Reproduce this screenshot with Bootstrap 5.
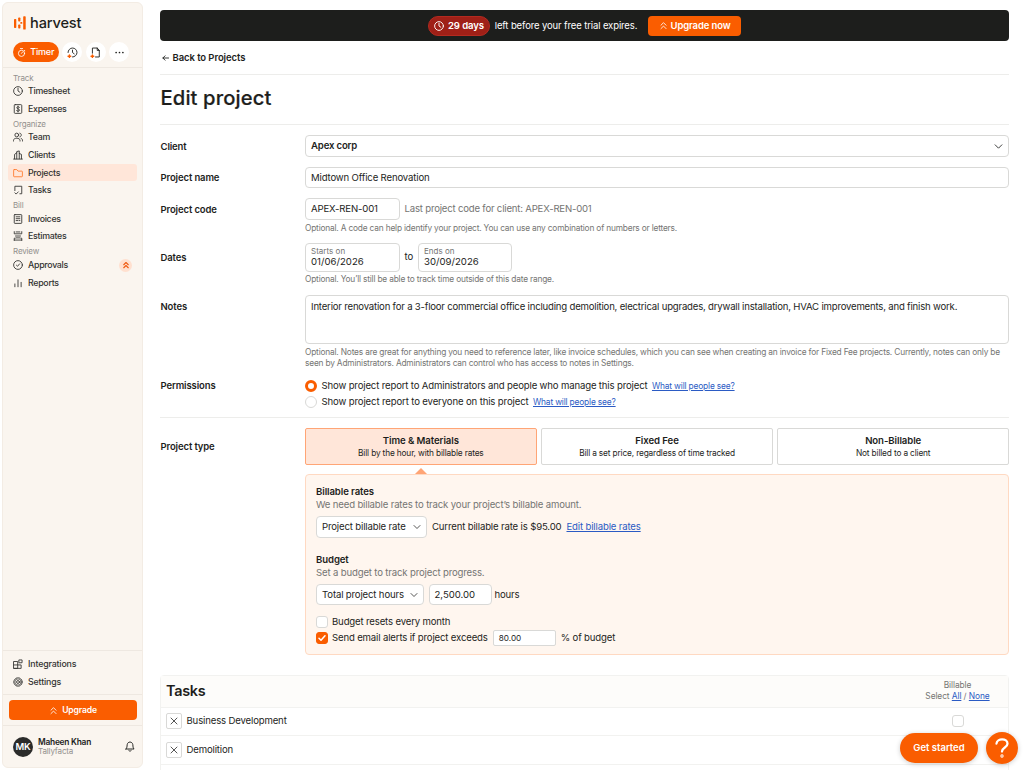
<!DOCTYPE html>
<html lang="en">
<head>
<meta charset="utf-8">
<meta name="viewport" content="width=device-width, initial-scale=1">
<title>Edit project – Harvest</title>
<link href="https://cdn.jsdelivr.net/npm/bootstrap@5.3.0/dist/css/bootstrap.min.css" rel="stylesheet">
<script src="https://cdn.jsdelivr.net/npm/bootstrap@5.3.0/dist/js/bootstrap.bundle.min.js" defer></script>
<style>
:root{--orange:#fa5d00;--ink:#1d1e1c;--line:#ededeb;--field:#d9d9d7;--grey:#757573;--warm:#eee8e1}
html,body{height:770px;overflow:hidden}
body{font-family:Inter,"Liberation Sans",sans-serif;font-size:9.6px;line-height:14px;color:var(--ink);background:#fff;letter-spacing:-.16px}
svg{display:block;flex:none;fill:none;stroke:currentColor;stroke-width:1.5;stroke-linecap:round;stroke-linejoin:round}
a{color:#2b5bc4}
.side{width:141px;height:766px;margin:2px 17px 0 2px;background:#faf5ef;border:1px solid #f3ece4;border-radius:6px}
.brand-row{height:65px;border-bottom:1px solid var(--warm);padding:12px 10px 0}
.brand-name{font-size:14.6px;font-weight:500;line-height:16px;letter-spacing:-.15px;margin-left:4px}
.quick{margin-top:11px;gap:3.6px}
.pill{height:20px;border-radius:10px}
.pill-main{width:45.5px;background:var(--orange);color:#fff;font-weight:500;font-size:9px;letter-spacing:-.15px}
.pill-dot{width:20px;background:#fff}
.pill-dot svg{stroke-width:1.3}
.side-head{height:11px;line-height:12px;padding-left:10px;font-size:8px;color:#92908d;letter-spacing:-.15px}
.side-item{height:17.6px;margin:0 5px;padding:0 5px;border-radius:3px;font-size:8.8px;color:#333331;letter-spacing:-.27px;font-weight:500}
.side-item svg{width:10px;height:10px;margin-right:5px;stroke-width:1.4}
.side-item.current{background:#ffe6d9}
.side-item.current svg{color:#ff7a2e}
.bump{width:13px;height:13px;border-radius:50%;background:#ffe0cf;color:#f05a10}
.side-item .bump svg{width:8px;height:8px;margin:0;stroke-width:2.2}
.side-tools{height:44px;border-top:1px solid var(--warm);padding-top:4.5px}
.side-tools .side-item{letter-spacing:-.15px}
.side-up{height:32px;border-top:1px solid var(--warm);border-bottom:1px solid var(--warm);padding:5px 5px 0 6px}
.upgrade-btn{height:20px;border-radius:4px;background:var(--orange);color:#fff;font-weight:600;font-size:8.6px}
.side-user{height:41px;padding:0 7px 0 10px}
.avatar{width:20px;height:20px;border-radius:50%;background:#2b2b2a;color:#fff;font-size:9.5px;font-weight:600}
.user-name{font-size:8.4px;line-height:9px;font-weight:600;letter-spacing:-.25px}
.user-org{font-size:8px;line-height:9px;color:#92908d;letter-spacing:-.15px}
.main-col{width:849px;padding-top:10px}
.trial{height:31px;background:#1d1e1c;border-radius:4px;color:#fff;font-size:9.5px;letter-spacing:-.12px}
.trial-days{height:20px;border-radius:10px;background:#9f2017;border:1px solid #b42a20;font-weight:600;width:61.5px;font-size:9.6px}
.trial-btn{height:20px;width:92.5px;border-radius:4px;background:var(--orange);font-weight:600}
.back{height:33.5px;border-bottom:1px solid var(--line);font-weight:600;font-size:9.5px;padding:2px 0 0 1.5px;letter-spacing:-.08px}
.title{height:50.5px;border-bottom:1px solid var(--line);font-size:20.2px;line-height:46px;font-weight:500;margin:0;letter-spacing:.12px;padding-left:.5px;-webkit-text-stroke:.2px currentColor}
.flabel{width:145px;flex:none;font-weight:600;font-size:9.5px;padding:4.5px 0 0 .5px;letter-spacing:-.12px}
.fbody{flex:1;min-width:0}
.field{height:21.5px;border:1px solid var(--field);border-radius:4px;background:#fff;padding:1px 5px 0;display:flex;align-items:center}
.notes{height:48.5px;padding-top:4px;align-items:flex-start;letter-spacing:-.2px}
.hint{font-size:8.35px;line-height:11.2px;color:var(--grey);letter-spacing:-.19px}
.grey{color:var(--grey)}
.datebox{width:94.5px;height:28.5px;border:1px solid var(--field);border-radius:4px;padding:1px 5px}
.datebox div{line-height:10px;letter-spacing:.02px}
.datebox .cap{font-size:8px;line-height:12px;color:var(--grey)}
.choice{height:15.7px;gap:4.5px}
.radio{width:12px;height:12px;border-radius:50%;border:1px solid var(--field);background:#fff}
.radio.on{border:3.6px solid var(--orange)}
.minor{font-size:8.4px;letter-spacing:-.17px}
.tick{width:12px;height:12px;border-radius:3px;border:1px solid var(--field);background:#fff;margin-right:4px}
.tick.on{background:var(--orange);border-color:var(--orange);color:#fff}
.ptype{flex:1;height:36.5px;border:1px solid var(--field);border-radius:2px;text-align:center;padding-top:6px;line-height:12px;font-size:8.3px;letter-spacing:-.15px}
.ptype b{display:block;font-size:9.6px;font-weight:600;line-height:12px;letter-spacing:-.08px}
.ptype.on{background:#ffe6d9;border-color:#ffa576}
.panel{position:relative;height:181px;margin-top:9.5px;border:1px solid #ffd9c2;border-radius:4px;background:#fff6ef;padding:10px}
.panel:before{content:"";position:absolute;left:109px;top:-7px;border:6px solid transparent;border-top:0;border-bottom-color:#ffa576}
.panel-head{font-weight:600;line-height:13px;letter-spacing:-.1px}
.panel-sub{line-height:13px;color:var(--grey);margin-bottom:5px}
.tasks{height:120px;margin-top:20px;border:1px solid #f2f2f0;border-radius:4px 4px 0 0}
.tasks-head{height:31.5px;background:#fdfcfa;border-bottom:1px solid #f2f2f0;padding:0 5px}
.tasks-title{font-size:14.4px;font-weight:600;letter-spacing:-.25px}
.trow{height:28.8px;border-bottom:1px solid #f2f2f0;padding:0 5px}
.xbtn{width:16px;height:16px;border:1px solid var(--field);border-radius:2px;margin-right:4.5px}
.bcol{width:91px;text-align:center;font-size:8.4px;line-height:11px;letter-spacing:-.09px}
.bcol .tick{margin:0}
.chat{position:absolute;left:900px;top:733px;width:78px;height:30px;border-radius:15px;background:var(--orange);color:#fff;font-weight:600;font-size:9.5px;letter-spacing:0;box-shadow:0 1px 5px #0003}
.help{position:absolute;left:986px;top:732px;width:32px;height:32px;border-radius:50%;background:var(--orange);color:#fff;box-shadow:0 1px 5px #0003}
</style>
</head>
<body class="position-relative">
<svg width="0" height="0" class="position-absolute">
<symbol id="up" viewBox="0 0 16 16"><path d="M3.500 7.500L8 3l4.500 4.500M3.500 13.500L8 9l4.500 4.500"/></symbol>
<symbol id="clock" viewBox="0 0 16 16"><circle cx="8" cy="8" r="7"/><path d="M8 3.500V8l3 2"/></symbol>
<symbol id="down" viewBox="0 0 16 16"><path d="M2 5l6 6 6-6"/></symbol>
<symbol id="cross" viewBox="0 0 16 16"><path d="M2 2l12 12M14 2L2 14"/></symbol>
</svg>
<div class="d-flex">
<aside class="side d-flex flex-column">
  <div class="brand-row">
    <div class="d-flex align-items-center">
      <svg width="13" height="14" viewBox="0 0 13 14" style="stroke:none;fill:#fa5d00"><rect x="1" y="3" width="2.300" height="9" rx=".7"/><rect x="5.200" y="1.500" width="2.200" height="4" rx=".7"/><rect x="5.200" y="8.500" width="2.200" height="4" rx=".7"/><rect x="7.300" y="6" width="2" height="1.800" rx=".5"/><rect x="10.200" y=".200" width="2.500" height="13.400" rx=".7"/></svg>
      <div class="brand-name">harvest</div>
    </div>
    <div class="quick d-flex">
      <div class="pill pill-main d-flex align-items-center justify-content-center gap-1"><svg width="9" height="9" viewBox="0 0 16 16"><circle cx="8" cy="9.500" r="5.500"/><path d="M6 1h4M8 9.500l2-2.500M13 4l1 1"/></svg>Timer</div>
      <div class="pill pill-dot d-flex align-items-center justify-content-center"><svg width="11" height="11" viewBox="0 0 16 16"><path d="M1.500 8A6.500 6.500 0 1 1 8 14.500M8 4.500V8l2.500 2"/><path d="M3.500 11.500v4M1.500 13.500h4" stroke="#fa5d00" stroke-width="2"/></svg></div>
      <div class="pill pill-dot d-flex align-items-center justify-content-center"><svg width="11" height="11" viewBox="0 0 16 16"><path d="M3.500 9V1.500h7l3 3.500v9.500H8M10.500 1.500V5h3"/><path d="M3.500 11.500v4M1.500 13.500h4" stroke="#fa5d00" stroke-width="2"/></svg></div>
      <div class="pill pill-dot d-flex align-items-center justify-content-center"><svg width="9" height="9" viewBox="0 0 16 16" style="fill:currentColor;stroke:none"><circle cx="2" cy="8" r="1.500"/><circle cx="8" cy="8" r="1.500"/><circle cx="14" cy="8" r="1.500"/></svg></div>
    </div>
  </div>
  <nav class="flex-grow-1" style="padding-top:3.500px">
    <div class="side-head">Track</div>
    <div class="side-item d-flex align-items-center"><svg><use href="#clock"/></svg>Timesheet</div>
    <div class="side-item d-flex align-items-center"><svg viewBox="0 0 16 16"><rect x="2" y="1" width="12" height="14" rx="1.500"/><path d="M10.500 5.500C10 4 6 4 6 6s4.500 1.500 4.500 3.800S6 12 5.500 10.500M8 3.300v9.400"/></svg>Expenses</div>
    <div class="side-head">Organize</div>
    <div class="side-item d-flex align-items-center"><svg viewBox="0 0 16 16"><circle cx="6" cy="4.800" r="3"/><path d="M.800 14.500v-1.200c0-4.400 10.400-4.400 10.400 0v1.200M11 1.800c3.200.400 3.200 5.500 0 6M13 10.200c1.600.600 2.300 1.600 2.300 4.300"/></svg>Team</div>
    <div class="side-item d-flex align-items-center"><svg viewBox="0 0 16 16"><path d="M1 14.500h14M2.500 14V7L6 4.500M6 14V2.500l4-1V14M10 5.500l3.500 1.500v7"/></svg>Clients</div>
    <div class="side-item current d-flex align-items-center"><svg viewBox="0 0 16 16"><path d="M2 2.500h4l2 2.500h6a1 1 0 0 1 1 1v7a1 1 0 0 1-1 1H2a1 1 0 0 1-1-1V3.500a1 1 0 0 1 1-1z"/></svg>Projects</div>
    <div class="side-item d-flex align-items-center"><svg viewBox="0 0 16 16"><path d="M3 9V2h11v12h-3M3 12.500l2 2L8.500 11"/></svg>Tasks</div>
    <div class="side-head">Bill</div>
    <div class="side-item d-flex align-items-center"><svg viewBox="0 0 16 16"><rect x="2" y="1" width="12" height="14" rx="1"/><path d="M5 4.500h6M5 7.500h6M5 10.500h3M10 10.500h1"/></svg>Invoices</div>
    <div class="side-item d-flex align-items-center"><svg viewBox="0 0 16 16"><path d="M2 1v3.500h12V1M5 1.500h6M4 8h8M5 11h6M2 15v-3.500h1.500M14 15v-3.500h-1.500M2 14.500h12"/></svg>Estimates</div>
    <div class="side-head">Review</div>
    <div class="side-item d-flex align-items-center"><svg viewBox="0 0 16 16"><circle cx="8" cy="8" r="7"/><path d="M5.500 8.300l1.800 1.700 3.200-3.800"/></svg>Approvals<span class="bump ms-auto d-flex align-items-center justify-content-center"><svg><use href="#up"/></svg></span></div>
    <div class="side-item d-flex align-items-center"><svg viewBox="0 0 16 16"><path d="M3 14V9.500M8 14V3M13 14V7"/></svg>Reports</div>
  </nav>
  <div class="side-tools">
    <div class="side-item d-flex align-items-center"><svg viewBox="0 0 16 16"><path d="M1.500 4h6v11h-6zM1.500 9.500h11.500V15H1.500M10 1.500h4.500V6H10z"/></svg>Integrations</div>
    <div class="side-item d-flex align-items-center"><svg viewBox="0 0 16 16"><circle cx="8" cy="8" r="6.700" stroke-dasharray="3.200 1"/><circle cx="8" cy="8" r="5" stroke-width="1"/><circle cx="8" cy="8" r="2.300"/></svg>Settings</div>
  </div>
  <div class="side-up">
    <div class="upgrade-btn d-flex align-items-center justify-content-center gap-1"><svg width="9" height="9"><use href="#up"/></svg>Upgrade</div>
  </div>
  <div class="side-user d-flex align-items-center">
    <div class="avatar d-flex align-items-center justify-content-center">MK</div>
    <div style="margin-left:5px"><div class="user-name">Maheen Khan</div><div class="user-org">Tallyfacta</div></div>
    <svg class="ms-auto" width="10" height="11" viewBox="0 0 16 17"><path d="M1.500 12.500h13c-2-2-1.500-3.500-2-7-.800-5.500-8.200-5.500-9 0-.500 3.500 0 5-2 7zM6 15c1 1.200 3 1.200 4 0"/></svg>
  </div>
</aside>

<main class="main-col">
  <div class="trial d-flex align-items-center justify-content-center">
    <span class="trial-days d-flex align-items-center justify-content-center gap-1"><svg width="10" height="10"><use href="#clock"/></svg>29 days</span>
    <span style="margin:0 11px 0 5px">left before your free trial expires.</span>
    <span class="trial-btn d-flex align-items-center justify-content-center" style="gap:3px"><svg width="9" height="9"><use href="#up"/></svg>Upgrade now</span>
  </div>
  <div class="back d-flex align-items-center gap-1"><svg width="7" height="8" viewBox="0 0 16 16" style="stroke-width:2"><path d="M15 8H2M7 3L2 8l5 5"/></svg>Back to Projects</div>
  <h1 class="title">Edit project</h1>

  <div class="d-flex" style="margin-top:10px;height:31.500px"><div class="flabel">Client</div><div class="fbody"><div class="field fw-semibold">Apex corp<svg class="ms-auto" width="9" height="9"><use href="#down"/></svg></div></div></div>
  <div class="d-flex" style="height:31.500px"><div class="flabel">Project name</div><div class="fbody"><div class="field">Midtown Office Renovation</div></div></div>
  <div class="d-flex" style="height:45px"><div class="flabel">Project code</div><div class="fbody"><div class="d-flex align-items-center"><div class="field" style="width:94.500px">APEX-REN-001</div><span class="grey" style="margin:1px 0 0 5px;letter-spacing:-.2px">Last project code for client: APEX-REN-001</span></div><div class="hint" style="margin-top:3px">Optional. A code can help identify your project. You can use any combination of numbers or letters.</div></div></div>
  <div class="d-flex" style="height:52px"><div class="flabel" style="padding-top:7.500px">Dates</div><div class="fbody"><div class="d-flex align-items-center"><div class="datebox"><div class="cap">Starts on</div><div>01/06/2026</div></div><span style="margin:0 5px">to</span><div class="datebox"><div class="cap">Ends on</div><div>30/09/2026</div></div></div><div class="hint" style="margin-top:2.500px">Optional. You’ll still be able to track time outside of this date range.</div></div></div>
  <div class="d-flex" style="height:83px"><div class="flabel">Notes</div><div class="fbody"><div class="field notes">Interior renovation for a 3-floor commercial office including demolition, electrical upgrades, drywall installation, HVAC improvements, and finish work.</div><div class="hint" style="margin-top:3px">Optional. Notes are great for anything you need to reference later, like invoice schedules, which you can see when creating an invoice for Fixed Fee projects. Currently, notes can only be seen by Administrators. Administrators can control who has access to notes in Settings.</div></div></div>
  <div class="d-flex border-bottom" style="height:40px;border-color:var(--line)!important"><div class="flabel" style="padding-top:.500px">Permissions</div><div class="fbody">
    <div class="choice d-flex align-items-center"><span class="radio on"></span><span>Show project report to Administrators and people who manage this project</span><a class="minor" href="#">What will people see?</a></div>
    <div class="choice d-flex align-items-center"><span class="radio"></span><span style="letter-spacing:-.14px">Show project report to everyone on this project</span><a class="minor" href="#">What will people see?</a></div></div></div>
  <div class="d-flex" style="padding-top:10px"><div class="flabel" style="padding-top:11.500px">Project type</div><div class="fbody">
    <div class="d-flex" style="gap:4.500px"><div class="ptype on"><b>Time &amp; Materials</b>Bill by the hour, with billable rates</div><div class="ptype"><b>Fixed Fee</b>Bill a set price, regardless of time tracked</div><div class="ptype"><b>Non-Billable</b>Not billed to a client</div></div>
    <div class="panel">
      <div class="panel-head">Billable rates</div>
      <div class="panel-sub">We need billable rates to track your project’s billable amount.</div>
      <div class="d-flex align-items-center"><div class="field" style="width:111px">Project billable rate<svg class="ms-auto" width="8" height="8"><use href="#down"/></svg></div><span style="margin:0 5px">Current billable rate is $95.00</span><a href="#">Edit billable rates</a></div>
      <div class="panel-head" style="margin-top:15px">Budget</div>
      <div class="panel-sub">Set a budget to track project progress.</div>
      <div class="d-flex align-items-center"><div class="field" style="width:108px">Total project hours<svg class="ms-auto" width="8" height="8"><use href="#down"/></svg></div><div class="field" style="width:63px;margin:0 3px 0 4.500px;letter-spacing:-.05px">2,500.00</div><span style="padding-top:1px">hours</span></div>
      <div class="d-flex align-items-center" style="height:15.500px;margin-top:9px"><span class="tick"></span>Budget resets every month</div>
      <div class="d-flex align-items-center" style="height:16px"><span class="tick on d-flex align-items-center justify-content-center"><svg width="8" height="8" viewBox="0 0 16 16" style="stroke-width:3"><path d="M2 8.500l4 4 8-9"/></svg></span>Send email alerts if project exceeds<div class="field" style="width:63px;height:16px;margin:0 5px;font-size:8.200px;border-radius:2px;letter-spacing:0">80.00</div>% of budget</div>
    </div>
  </div></div>

  <section class="tasks">
    <div class="tasks-head d-flex align-items-center justify-content-between"><span class="tasks-title">Tasks</span><div class="bcol grey">Billable<br>Select <a href="#">All</a> / <a href="#">None</a></div></div>
    <div class="trow d-flex align-items-center"><span class="xbtn d-flex align-items-center justify-content-center"><svg width="8" height="8"><use href="#cross"/></svg></span>Business Development<div class="bcol ms-auto d-flex justify-content-center"><span class="tick"></span></div></div>
    <div class="trow d-flex align-items-center"><span class="xbtn d-flex align-items-center justify-content-center"><svg width="8" height="8"><use href="#cross"/></svg></span>Demolition</div>
  </section>
</main>
</div>
<div class="chat d-flex align-items-center justify-content-center">Get started</div>
<div class="help d-flex align-items-center justify-content-center"><svg width="18" height="20" viewBox="0 0 18 20" style="stroke-width:2.300"><path d="M3.500 5.500c.500-5.500 11-5.500 11 .300C14.500 9.500 9 9.500 9 13.500"/><circle cx="9" cy="18" r=".500"/></svg></div>
</body>
</html>
